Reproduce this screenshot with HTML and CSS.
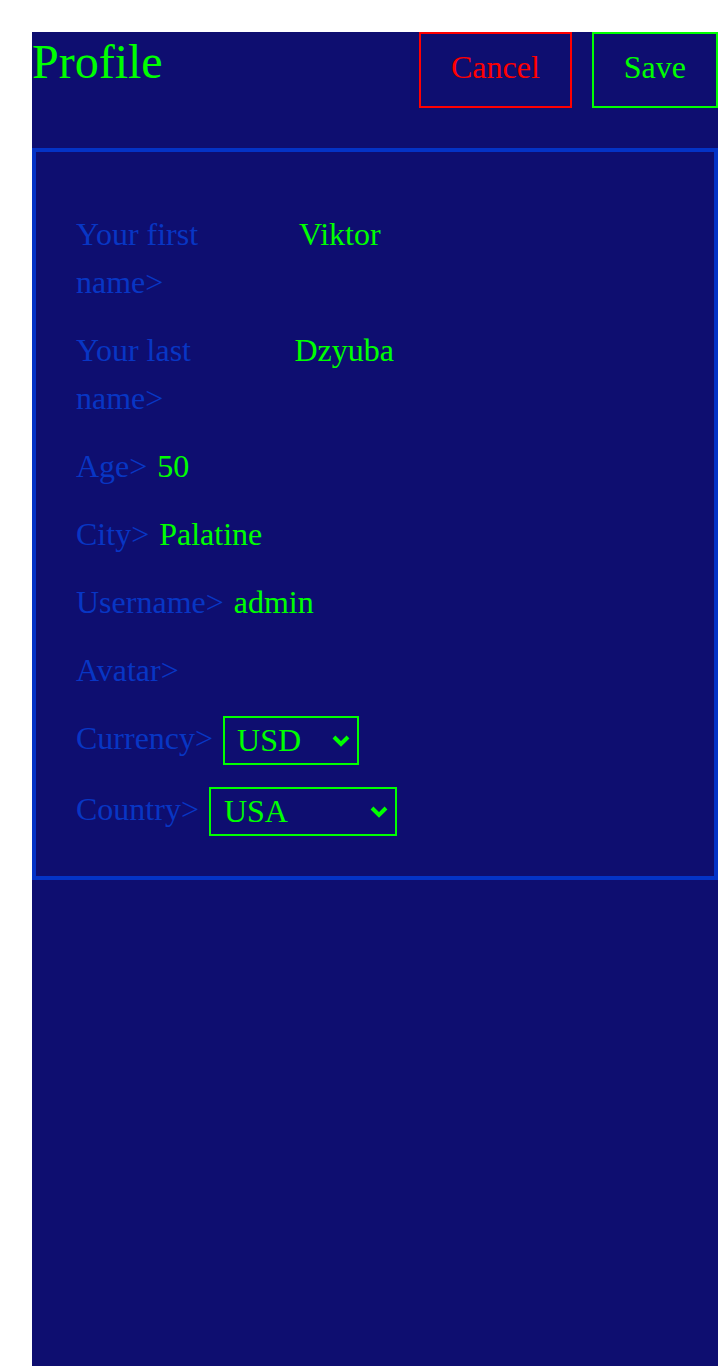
FILE: index.html
```html
<!DOCTYPE html>
<html lang="en">
<head>
<meta charset="utf-8">
<title>Profile</title>
<link rel="stylesheet" href="styles.css">
</head>
<body>
<main class="page">
  <header class="header">
    <h1 class="title">Profile</h1>
    <div class="actions">
      <button class="btn btn-cancel" type="button">Cancel</button>
      <button class="btn btn-save" type="button">Save</button>
    </div>
  </header>
  <section class="card">
    <div class="row">
      <span class="label">Your first name&gt;</span>
      <span class="value value-wide">Viktor</span>
    </div>
    <div class="row">
      <span class="label">Your last name&gt;</span>
      <span class="value value-wide">Dzyuba</span>
    </div>
    <div class="row">
      <span class="label">Age&gt;</span>
      <span class="value">50</span>
    </div>
    <div class="row">
      <span class="label">City&gt;</span>
      <span class="value">Palatine</span>
    </div>
    <div class="row">
      <span class="label">Username&gt;</span>
      <span class="value">admin</span>
    </div>
    <div class="row">
      <span class="label">Avatar&gt;</span>
    </div>
    <div class="row row-select">
      <span class="label">Currency&gt;</span>
      <div class="select select-currency">
        <span class="select-text">USD</span>
        <svg class="chevron" width="18" height="12" viewBox="0 0 18 12" aria-hidden="true"><polyline points="2,2 9,9 16,2" fill="none" stroke="#00ff00" stroke-width="4" stroke-linecap="butt" stroke-linejoin="miter"/></svg>
      </div>
    </div>
    <div class="row row-select">
      <span class="label">Country&gt;</span>
      <div class="select select-country">
        <span class="select-text">USA</span>
        <svg class="chevron" width="18" height="12" viewBox="0 0 18 12" aria-hidden="true"><polyline points="2,2 9,9 16,2" fill="none" stroke="#00ff00" stroke-width="4" stroke-linecap="butt" stroke-linejoin="miter"/></svg>
      </div>
    </div>
  </section>
</main>
</body>
</html>
```

FILE: styles.css
```css
html, body {
  margin: 0;
  padding: 0;
  background: #ffffff;
}

body {
  font-family: "Liberation Serif", "Times New Roman", serif;
  overflow: hidden;
}

.page {
  margin: 32px 0 0 32px;
  min-height: calc(100vh - 32px);
  background: #0e0e70;
  box-sizing: border-box;
}

.header {
  display: flex;
  justify-content: space-between;
  align-items: flex-start;
  margin-bottom: 40px;
}

.title {
  margin: 0;
  font-size: 48px;
  font-weight: normal;
  line-height: 60px;
  color: #00ff00;
}

.actions {
  display: flex;
  gap: 20px;
}

.btn {
  font-family: "Liberation Serif", "Times New Roman", serif;
  font-size: 32px;
  line-height: 37px;
  padding: 15px 30px 20px;
  background: transparent;
  border: 2px solid;
  margin: 0;
  cursor: pointer;
}

.btn-cancel {
  color: #ff0000;
  border-color: #ff0000;
}

.btn-save {
  color: #00ff00;
  border-color: #00ff00;
}

.card {
  border: 4px solid #0433c6;
  padding: 58px 40px 40px;
  display: flex;
  flex-direction: column;
  gap: 20px;
}

.row {
  display: flex;
  align-items: baseline;
  gap: 10px;
  font-size: 32px;
  line-height: 48px;
}

.row-select {
  align-items: flex-start;
}

.label {
  color: #0836c4;
}

.value {
  color: #00ff00;
}

.value-wide {
  flex: 0 1 383px;
}

.select {
  box-sizing: border-box;
  height: 49px;
  margin-top: 2px;
  border: 2px solid #00ff00;
  display: flex;
  align-items: center;
  justify-content: space-between;
  padding: 0 7px 0 12px;
  color: #00ff00;
  line-height: 45px;
}

.select-currency {
  width: 136px;
}

.select-country {
  width: 188px;
  padding-left: 13px;
}

.chevron {
  display: block;
  flex: none;
}
```
